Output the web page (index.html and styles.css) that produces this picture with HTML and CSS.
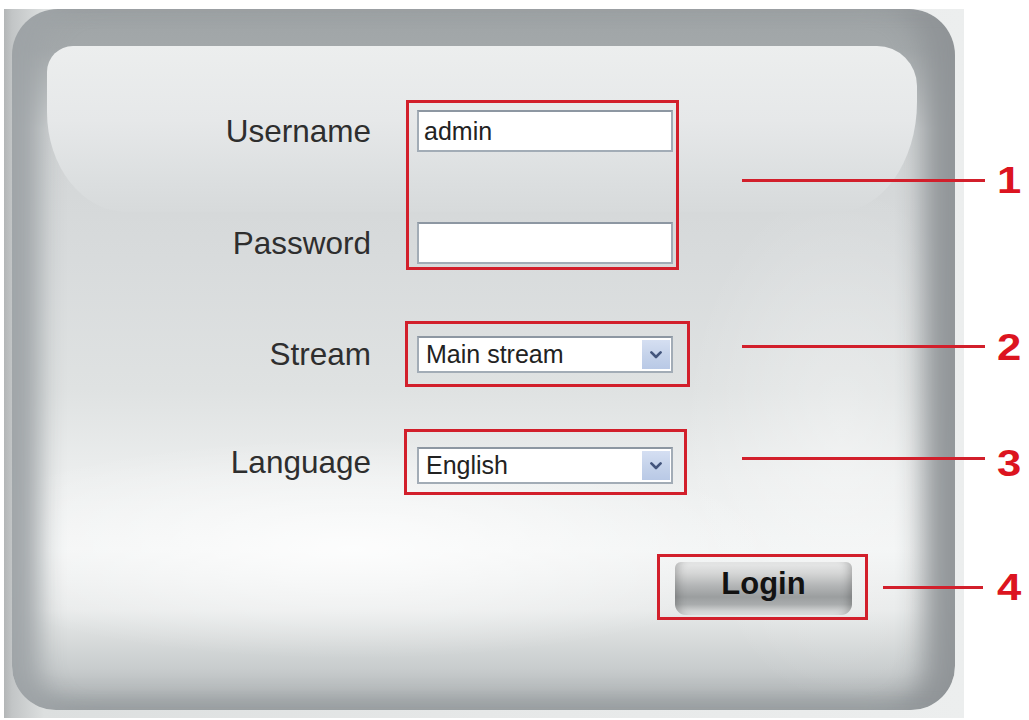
FILE: index.html
```html
<!DOCTYPE html>
<html lang="en">
<head>
<meta charset="utf-8">
<title>Login</title>
<link rel="stylesheet" href="styles.css">
</head>
<body>
<div class="page">
  <div class="screen">
    <div class="panel">
      <div class="row row-cred">
        <div class="labels">
          <span class="label">Username</span>
          <span class="label">Password</span>
        </div>
        <div class="mark mark-cred">
          <input class="field" type="text" value="admin">
          <input class="field" type="password" value="">
        </div>
        <div class="callout callout-1"><span class="line"></span><span class="num">1</span></div>
      </div>

      <div class="row row-stream">
        <span class="label">Stream</span>
        <div class="mark mark-stream">
          <div class="select">
            <span class="select-value">Main stream</span>
            <span class="select-btn"><svg width="12" height="8" viewBox="0 0 12 8"><path d="M1.4 1.4 L6 6 L10.6 1.4" fill="none" stroke="#43557c" stroke-width="2.6" stroke-linecap="round" stroke-linejoin="round"/></svg></span>
          </div>
        </div>
        <div class="callout callout-2"><span class="line"></span><span class="num">2</span></div>
      </div>

      <div class="row row-lang">
        <span class="label">Language</span>
        <div class="mark mark-lang">
          <div class="select">
            <span class="select-value">English</span>
            <span class="select-btn"><svg width="12" height="8" viewBox="0 0 12 8"><path d="M1.4 1.4 L6 6 L10.6 1.4" fill="none" stroke="#43557c" stroke-width="2.6" stroke-linecap="round" stroke-linejoin="round"/></svg></span>
          </div>
        </div>
        <div class="callout callout-3"><span class="line"></span><span class="num">3</span></div>
      </div>

      <div class="row-login">
        <div class="mark mark-login">
          <button class="login" type="button">Login</button>
        </div>
        <div class="callout callout-4"><span class="line line-short"></span><span class="num">4</span></div>
      </div>
    </div>
  </div>
</div>
</body>
</html>
```

FILE: styles.css
```css
* { box-sizing: border-box; }

body {
  margin: 0;
  background: #ffffff;
  font-family: "Liberation Sans", Arial, sans-serif;
}

.page {
  padding: 9px 0 0 4px;
}

.screen {
  width: 960px;
  height: 709px;
  padding: 0 9px 8px 8px;
  background: linear-gradient(90deg, #b3b6b7 0, #c2c5c6 8px, #dcdfdf 40px, #e6e8e8 50%, #eceeee 100%);
}

.panel {
  position: relative;
  height: 100%;
  padding-top: 91px;
  display: flex;
  flex-direction: column;
  border-radius: 46px 46px 44px 44px;
  background:
    radial-gradient(ellipse 430px 110px at 36% 77%, rgba(255,255,255,0.8), rgba(255,255,255,0)),
    radial-gradient(ellipse 160px 260px at 88% 62%, rgba(255,255,255,0.35), rgba(255,255,255,0)),
    linear-gradient(180deg, #9fa4a6 0, #a3a8aa 40px, #d2d5d6 120px, #d8dbdc 250px, #dfe2e2 380px, #eceeee 470px, #f2f4f4 540px, #e8eaea 600px, #c8cccd 660px, #a6abad 701px);
  box-shadow:
    inset 36px 0 24px -8px rgba(158,163,166,0.95),
    inset -40px 0 26px -8px rgba(143,148,151,0.95),
    inset 0 -14px 20px -6px rgba(150,155,158,0.7);
}

.panel::before {
  content: "";
  position: absolute;
  top: 37px;
  left: 35px;
  right: 38px;
  height: 166px;
  border-radius: 26px 40px 80px 80px / 26px 40px 110px 100px;
  background: linear-gradient(180deg, #eceeee 0%, #e6e8e9 45%, #dcdfe0 80%, #d7dadb 100%);
}

.row {
  position: relative;
  display: grid;
  grid-template-columns: 359px 371px auto;
  align-items: center;
}

.row-stream { margin-top: 51px; }
.row-lang { margin-top: 42px; }

.labels {
  align-self: start;
  display: flex;
  flex-direction: column;
  gap: 70px;
  padding-top: 10px;
}

.label {
  display: block;
  text-align: right;
  font-size: 31.5px;
  line-height: 42px;
  color: #2e2e2e;
}

.mark {
  justify-self: start;
  border: 3px solid #d21f2b;
}

.mark-cred {
  margin-left: 35px;
  padding: 7px 3px 3px 8px;
  display: flex;
  flex-direction: column;
  gap: 70px;
}

.mark-stream {
  margin-left: 34px;
  padding: 12px 14px 11px 9px;
}

.mark-lang {
  margin-left: 33px;
  padding: 15px 11px 8px 10px;
}

.field {
  display: block;
  width: 256px;
  height: 42px;
  margin: 0;
  padding: 0 5px;
  border: 2px solid #a2acb6;
  border-top-color: #8d97a2;
  border-radius: 0;
  background: #ffffff;
  font-family: "Liberation Sans", Arial, sans-serif;
  font-size: 25px;
  color: #222222;
  outline: none;
}

.select {
  display: flex;
  align-items: center;
  width: 256px;
  height: 37px;
  border: 2px solid #a2acb6;
  border-top-color: #8d97a2;
  background: #ffffff;
}

.select-value {
  flex: 1;
  padding-left: 7px;
  font-size: 25px;
  color: #222222;
}

.select-btn {
  display: flex;
  align-items: center;
  justify-content: center;
  width: 28px;
  height: 29px;
  margin-right: 1px;
  background: linear-gradient(180deg, #d5dff2 0%, #c4d2ea 55%, #b9c9e6 100%);
}

.callout {
  justify-self: start;
  display: flex;
  align-items: center;
  gap: 12px;
}

.callout-1 { margin-bottom: 10px; }
.callout-2 { margin-bottom: 16px; }
.callout-3 { margin-bottom: 8px; }
.callout-3 .num { margin-top: 10px; }
.callout-2 .num { margin-top: 3px; }

.line {
  display: block;
  width: 243px;
  height: 3px;
  background: #d21f2b;
}

.line-short {
  width: 100px;
}

.num {
  display: inline-block;
  font-size: 37px;
  font-weight: bold;
  line-height: 1;
  color: #dc1420;
  transform: scaleX(1.18);
  transform-origin: left center;
}

.row-login {
  position: relative;
  margin-top: 59px;
  padding-left: 645px;
  display: flex;
  align-items: center;
}

.mark-login {
  padding: 5px 13px 2px 15px;
}

.callout-4 {
  margin-left: 15px;
  gap: 14px;
}

.login {
  display: block;
  width: 177px;
  height: 53px;
  margin: 0;
  padding: 0 0 9px;
  border: none;
  border-radius: 6px 6px 11px 11px;
  background: linear-gradient(180deg, #e9eaea 0%, #d4d5d5 22%, #b3b5b6 45%, #9b9e9f 66%, #a9acad 80%, #cfd1d1 92%, #e2e3e3 100%);
  box-shadow: inset 9px 0 8px -6px rgba(0,0,0,0.22), inset -9px 0 8px -6px rgba(0,0,0,0.22);
  font-family: "Liberation Sans", Arial, sans-serif;
  font-size: 31px;
  font-weight: bold;
  color: #121212;
}
```
